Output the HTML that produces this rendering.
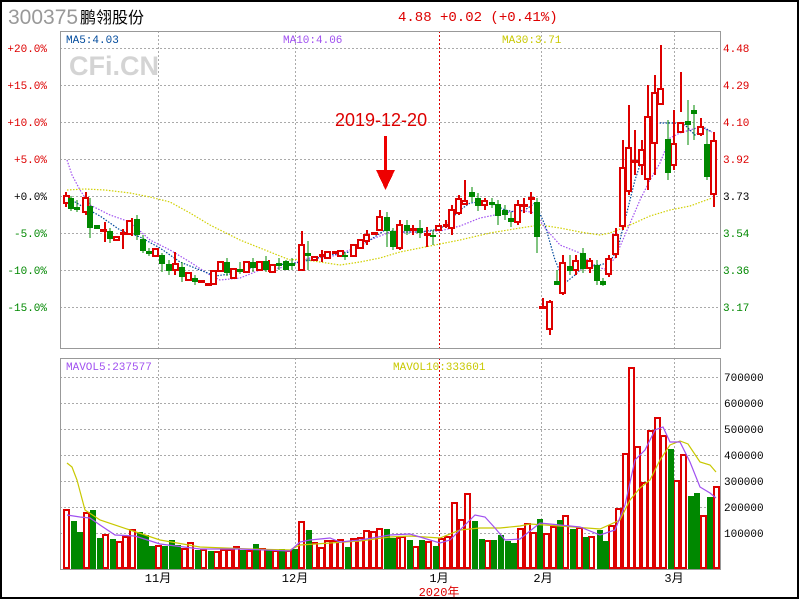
<!DOCTYPE html>
<html><head><meta charset="utf-8"><style>
body{margin:0;background:#fff}
svg{display:block}
text{font-family:"Liberation Mono","Noto Sans CJK SC",monospace;font-size:11px}
</style></head><body>
<svg width="800" height="600" viewBox="0 0 800 600" xmlns="http://www.w3.org/2000/svg" shape-rendering="crispEdges">
<rect x="1" y="1" width="797" height="597" fill="#fff" stroke="#000" stroke-width="2"/>
<text x="8" y="24" style="font-family:'Liberation Sans',sans-serif;font-size:21px" fill="#999">300375</text>
<text x="80" y="23" style="font-family:'Liberation Sans','Noto Sans CJK SC',sans-serif;font-size:16px" fill="#000">鹏翎股份</text>
<text x="398" y="21" style="font-size:14px" fill="#d00">4.88 +0.02 (+0.41%)</text>

<g stroke="#aaa" stroke-dasharray="2,2" fill="none">
<path d="M60 48.5H720M60 85.5H720M60 122.5H720M60 159.5H720M60 196.5H720M60 233.5H720M60 270.5H720M60 307.5H720"/>
<path d="M158.5 31V348M295.5 31V348M541.5 31V348M674.5 31V348"/>
<path d="M60 377.5H720M60 403.5H720M60 429.5H720M60 455.5H720M60 481.5H720M60 507.5H720M60 533.5H720"/>
<path d="M158.5 358V569M295.5 358V569M541.5 358V569M674.5 358V569"/>
</g>
<path d="M439.5 31V348M439.5 358V569" stroke="#d00" stroke-dasharray="2,2"/>
<rect x="60.5" y="31.5" width="660" height="317" fill="none" stroke="#999"/>
<rect x="60.5" y="358.5" width="660" height="211" fill="none" stroke="#999"/>

<text x="69" y="75" style="font-family:'Liberation Sans',sans-serif;font-size:27px;font-weight:bold" fill="#d4d4d4">CFi.CN</text>
<text x="66" y="43" fill="#004a9c">MA5:4.03</text>
<text x="283" y="43" fill="#a050f0">MA10:4.06</text>
<text x="502" y="43" fill="#c8c800">MA30:3.71</text>

<g text-anchor="end">
<text x="47" y="52" fill="#d00">+20.0%</text>
<text x="47" y="89" fill="#d00">+15.0%</text>
<text x="47" y="126" fill="#d00">+10.0%</text>
<text x="47" y="163" fill="#d00">+5.0%</text>
<text x="47" y="200" fill="#000">+0.0%</text>
<text x="47" y="237" fill="#080">-5.0%</text>
<text x="47" y="274" fill="#080">-10.0%</text>
<text x="47" y="311" fill="#080">-15.0%</text>
</g>
<text x="723" y="52" fill="#d00">4.48</text>
<text x="723" y="89" fill="#d00">4.29</text>
<text x="723" y="126" fill="#d00">4.10</text>
<text x="723" y="163" fill="#d00">3.92</text>
<text x="723" y="200" fill="#000">3.73</text>
<text x="723" y="237" fill="#080">3.54</text>
<text x="723" y="274" fill="#080">3.36</text>
<text x="723" y="311" fill="#080">3.17</text>

<text x="335" y="126" style="font-family:'Liberation Sans',sans-serif;font-size:18px" fill="#d00">2019-12-20</text>
<path d="M384 136h3v34h-3z" fill="#e00"/>
<path d="M376 170h19l-9.5 20z" fill="#e00"/>

<g fill="none" stroke-dasharray="1.5,1.5" stroke-width="1.2" shape-rendering="auto">
<polyline stroke="#d0d000" points="67,190 85,189 105,190 130,193 150,197 170,202 190,213 210,225 240,240 270,252 290,260 300,259 320,262 340,265 360,262 380,258 400,252 420,248 440,244 460,240 490,233 520,228 540,225 560,228 580,232 600,235 610,233 630,225 650,216 670,210 690,206 712,198"/>
<polyline stroke="#a050f0" points="67,160 72,175 80,190 90,205 110,215 130,222 150,240 170,250 190,262 210,275 220,280 240,278 260,270 280,268 295,263 310,258 330,257 350,250 370,240 390,232 420,232 440,231 460,226 480,218 500,214 520,210 535,213 545,228 560,245 580,253 595,267 605,269 615,258 625,235 640,200 650,180 660,163 670,138 680,133 690,130 700,127 712,132"/>
<polyline stroke="#004a9c" points="67,197 80,205 100,216 120,230 140,237 160,248 180,262 200,270 215,276 230,274 250,268 270,265 290,264 300,262 310,260 330,255 350,252 370,240 385,230 400,232 420,232 440,229 450,220 460,210 470,203 480,202 495,205 505,210 515,212 525,210 535,203 545,225 555,260 565,283 575,275 585,265 600,265 610,262 618,248 625,220 635,180 645,150 655,123 665,123 675,123 685,125 695,135 705,128 712,132"/>
</g>

<g stroke="#d00" fill="#fff" stroke-width="2">
<path d="M66 192v15M86 192v23M105 222v20M123 229v20M132 218v18M175 252v23M269 260v12M302 231v39M322 250v12M367 230v15M380 210v20M400 220v30M413 225v10M427 227v20M446 220v8M452 205v30M459 195v20M465 180v25M485 198v12M518 200v25M524 198v15M531 192v22M543 298v10M550 300v35M563 255v40M576 255v20M590 258v15M609 255v22M616 228v30M623 140v90M629 105v90M635 130v45M642 140v35M648 85v105M655 75v100M661 45v60M674 110v60M681 72v40M701 118v18M714 132v75"/>
<rect x="64" y="196" width="5" height="7"/><rect x="83" y="198" width="5" height="14"/><rect x="114" y="237" width="5" height="3"/><rect x="127" y="221" width="5" height="13"/><rect x="153" y="249" width="5" height="7"/><rect x="173" y="264" width="5" height="6"/><rect x="186" y="273" width="5" height="7"/><rect x="211" y="271" width="5" height="13"/><rect x="218" y="262" width="5" height="9"/><rect x="231" y="269" width="5" height="9"/><rect x="244" y="262" width="5" height="10"/><rect x="257" y="262" width="5" height="8"/><rect x="270" y="265" width="5" height="7"/><rect x="299" y="245" width="5" height="25"/><rect x="312" y="257" width="5" height="3"/><rect x="325" y="252" width="5" height="6"/><rect x="338" y="251" width="5" height="5"/><rect x="351" y="245" width="5" height="11"/><rect x="358" y="240" width="5" height="8"/><rect x="364" y="235" width="5" height="6"/><rect x="377" y="217" width="5" height="13"/><rect x="397" y="225" width="5" height="23"/><rect x="436" y="226" width="5" height="4"/><rect x="449" y="210" width="5" height="18"/><rect x="456" y="199" width="5" height="14"/><rect x="462" y="201" width="5" height="3"/><rect x="482" y="201" width="5" height="4"/><rect x="515" y="205" width="5" height="17"/><rect x="547" y="302" width="5" height="27"/><rect x="560" y="263" width="5" height="30"/><rect x="573" y="261" width="5" height="9"/><rect x="587" y="261" width="5" height="7"/><rect x="606" y="259" width="5" height="15"/><rect x="613" y="235" width="5" height="19"/><rect x="620" y="168" width="5" height="58"/><rect x="626" y="148" width="5" height="43"/><rect x="639" y="150" width="5" height="15"/><rect x="645" y="117" width="5" height="62"/><rect x="652" y="93" width="5" height="50"/><rect x="658" y="89" width="5" height="15"/><rect x="671" y="144" width="5" height="21"/><rect x="678" y="123" width="5" height="9"/><rect x="698" y="127" width="5" height="7"/><rect x="711" y="141" width="5" height="53"/>
</g>
<g fill="#d00">
<rect x="100" y="229" width="7" height="3"/><rect x="120" y="232" width="7" height="3"/><rect x="198" y="280" width="7" height="3"/><rect x="205" y="283" width="7" height="3"/><rect x="319" y="254" width="7" height="3"/><rect x="332" y="251" width="7" height="3"/><rect x="371" y="232" width="7" height="3"/><rect x="410" y="228" width="7" height="3"/><rect x="424" y="233" width="7" height="3"/><rect x="443" y="224" width="7" height="3"/><rect x="521" y="204" width="7" height="3"/><rect x="528" y="197" width="7" height="3"/><rect x="539" y="306" width="7" height="3"/><rect x="632" y="160" width="7" height="3"/>
</g>
<g fill="#080" stroke="#080">
<path d="M71 196v15M77 200v12M90 198v40M110 228v15M137 215v25M143 235v18M149 248v8M162 253v19M169 260v15M182 262v20M195 275v10M227 258v18M240 262v12M253 258v14M266 256v16M279 258v12M286 260v10M292 258v12M308 241v29M345 252v8M387 212v35M393 228v22M407 220v15M420 220v18M433 230v15M472 187v15M478 193v18M492 198v10M498 200v25M505 205v15M511 212v15M537 198v55M557 270v15M570 255v20M583 248v25M597 260v25M603 278v8M668 120v60M688 100v45M694 105v35M707 130v50"/>
</g>
<g fill="#080">
<rect x="68" y="198" width="6" height="11"/><rect x="74" y="207" width="6" height="3"/><rect x="87" y="206" width="6" height="22"/><rect x="94" y="225" width="6" height="4"/><rect x="107" y="231" width="6" height="8"/><rect x="134" y="219" width="6" height="16"/><rect x="140" y="239" width="6" height="12"/><rect x="146" y="251" width="6" height="3"/><rect x="159" y="255" width="6" height="9"/><rect x="166" y="264" width="6" height="7"/><rect x="179" y="267" width="6" height="10"/><rect x="192" y="278" width="6" height="4"/><rect x="224" y="262" width="6" height="11"/><rect x="237" y="269" width="6" height="3"/><rect x="250" y="262" width="6" height="6"/><rect x="263" y="261" width="6" height="9"/><rect x="276" y="263" width="6" height="3"/><rect x="283" y="261" width="6" height="9"/><rect x="289" y="263" width="6" height="3"/><rect x="305" y="253" width="6" height="3"/><rect x="342" y="255" width="6" height="2"/><rect x="384" y="217" width="6" height="14"/><rect x="390" y="231" width="6" height="16"/><rect x="404" y="225" width="6" height="6"/><rect x="417" y="228" width="6" height="5"/><rect x="430" y="235" width="6" height="2"/><rect x="469" y="192" width="6" height="5"/><rect x="475" y="198" width="6" height="8"/><rect x="489" y="202" width="6" height="3"/><rect x="495" y="204" width="6" height="12"/><rect x="502" y="210" width="6" height="5"/><rect x="508" y="218" width="6" height="4"/><rect x="534" y="202" width="6" height="35"/><rect x="554" y="281" width="6" height="4"/><rect x="567" y="266" width="6" height="5"/><rect x="580" y="253" width="6" height="16"/><rect x="594" y="265" width="6" height="16"/><rect x="600" y="281" width="6" height="4"/><rect x="665" y="139" width="6" height="34"/><rect x="685" y="121" width="6" height="4"/><rect x="691" y="110" width="6" height="4"/><rect x="704" y="144" width="6" height="33"/>
</g>

<text x="66" y="370" fill="#a050f0">MAVOL5:237577</text>
<text x="393" y="370" fill="#c8c800">MAVOL10:333601</text>
<text x="724" y="381" fill="#000">700000</text>
<text x="724" y="407" fill="#000">600000</text>
<text x="724" y="433" fill="#000">500000</text>
<text x="724" y="459" fill="#000">400000</text>
<text x="724" y="485" fill="#000">300000</text>
<text x="724" y="511" fill="#000">200000</text>
<text x="724" y="537" fill="#000">100000</text>

<g stroke="#d00" fill="#fff" stroke-width="2">
<rect x="64" y="510" width="5" height="58"/><rect x="84" y="513" width="5" height="55"/><rect x="103" y="535" width="5" height="33"/><rect x="117" y="542" width="5" height="26"/><rect x="123" y="537" width="5" height="31"/><rect x="130" y="530" width="5" height="38"/><rect x="156" y="546" width="5" height="22"/><rect x="182" y="549" width="5" height="19"/><rect x="188" y="543" width="5" height="25"/><rect x="201" y="550" width="5" height="18"/><rect x="214" y="552" width="5" height="16"/><rect x="221" y="550" width="5" height="18"/><rect x="227" y="550" width="5" height="18"/><rect x="234" y="547" width="5" height="21"/><rect x="247" y="551" width="5" height="17"/><rect x="260" y="549" width="5" height="19"/><rect x="273" y="551" width="5" height="17"/><rect x="286" y="551" width="5" height="17"/><rect x="299" y="522" width="5" height="46"/><rect x="312" y="543" width="5" height="25"/><rect x="319" y="548" width="5" height="20"/><rect x="325" y="541" width="5" height="27"/><rect x="332" y="541" width="5" height="27"/><rect x="338" y="540" width="5" height="28"/><rect x="351" y="539" width="5" height="29"/><rect x="358" y="538" width="5" height="30"/><rect x="364" y="531" width="5" height="37"/><rect x="371" y="532" width="5" height="36"/><rect x="377" y="529" width="5" height="39"/><rect x="397" y="538" width="5" height="30"/><rect x="400" y="537" width="5" height="31"/><rect x="413" y="547" width="5" height="21"/><rect x="426" y="542" width="5" height="26"/><rect x="439" y="539" width="5" height="29"/><rect x="445" y="537" width="5" height="31"/><rect x="452" y="503" width="5" height="65"/><rect x="459" y="520" width="5" height="48"/><rect x="465" y="494" width="5" height="74"/><rect x="485" y="541" width="5" height="27"/><rect x="518" y="529" width="5" height="39"/><rect x="525" y="524" width="5" height="44"/><rect x="531" y="533" width="5" height="35"/><rect x="544" y="534" width="5" height="34"/><rect x="551" y="527" width="5" height="41"/><rect x="563" y="516" width="5" height="52"/><rect x="577" y="528" width="5" height="40"/><rect x="589" y="537" width="5" height="31"/><rect x="609" y="526" width="5" height="42"/><rect x="616" y="509" width="5" height="59"/><rect x="623" y="454" width="5" height="114"/><rect x="629" y="368" width="5" height="200"/><rect x="635" y="447" width="5" height="121"/><rect x="642" y="483" width="5" height="85"/><rect x="648" y="431" width="5" height="137"/><rect x="655" y="418" width="5" height="150"/><rect x="661" y="436" width="5" height="132"/><rect x="674" y="481" width="5" height="87"/><rect x="681" y="455" width="5" height="113"/><rect x="701" y="516" width="5" height="52"/><rect x="714" y="487" width="5" height="81"/>
</g>
<g fill="#080">
<rect x="71" y="521" width="6" height="48"/><rect x="77" y="532" width="6" height="37"/><rect x="90" y="510" width="6" height="59"/><rect x="97" y="538" width="6" height="31"/><rect x="110" y="539" width="6" height="30"/><rect x="137" y="532" width="6" height="37"/><rect x="143" y="535" width="6" height="34"/><rect x="149" y="546" width="6" height="23"/><rect x="162" y="546" width="6" height="23"/><rect x="169" y="540" width="6" height="29"/><rect x="175" y="545" width="6" height="24"/><rect x="195" y="550" width="6" height="19"/><rect x="208" y="551" width="6" height="18"/><rect x="240" y="550" width="6" height="19"/><rect x="253" y="544" width="6" height="25"/><rect x="266" y="549" width="6" height="20"/><rect x="279" y="549" width="6" height="20"/><rect x="292" y="549" width="6" height="20"/><rect x="306" y="530" width="6" height="39"/><rect x="345" y="547" width="6" height="22"/><rect x="384" y="529" width="6" height="40"/><rect x="390" y="538" width="6" height="31"/><rect x="407" y="540" width="6" height="29"/><rect x="419" y="540" width="6" height="29"/><rect x="433" y="546" width="6" height="23"/><rect x="472" y="521" width="6" height="48"/><rect x="479" y="539" width="6" height="30"/><rect x="491" y="540" width="6" height="29"/><rect x="498" y="535" width="6" height="34"/><rect x="505" y="541" width="6" height="28"/><rect x="511" y="543" width="6" height="26"/><rect x="537" y="519" width="6" height="50"/><rect x="557" y="520" width="6" height="49"/><rect x="570" y="529" width="6" height="40"/><rect x="583" y="537" width="6" height="32"/><rect x="597" y="530" width="6" height="39"/><rect x="603" y="541" width="6" height="28"/><rect x="668" y="449" width="6" height="120"/><rect x="688" y="496" width="6" height="73"/><rect x="694" y="493" width="6" height="76"/><rect x="707" y="497" width="6" height="72"/>
</g>
<g fill="none" stroke-width="1.2" shape-rendering="auto">
<polyline stroke="#c8c800" points="67,463 72,467 77,480 85,510 100,520 130,530 160,540 200,547 250,549 290,550 300,545 330,543 360,541 390,537 410,536 440,538 460,530 480,528 500,528 520,526 530,524 560,526 600,529 620,520 630,500 640,488 650,480 660,460 670,445 680,441 688,444 700,462 710,465 716,472"/>
<polyline stroke="#a050f0" points="67,515 80,517 90,518 100,525 115,535 135,536 160,544 200,549 240,549 290,551 300,542 310,540 330,538 340,542 360,540 390,535 410,534 440,543 450,540 460,530 475,515 485,517 495,528 505,540 520,539 540,523 560,525 580,527 600,535 615,530 625,505 635,460 645,450 655,430 663,427 670,442 680,442 690,462 700,487 710,493 716,498"/>
</g>

<g fill="#000" text-anchor="middle" style="font-family:'Liberation Mono','Noto Sans CJK SC',monospace;font-size:12px">
<text x="158" y="582" style="font-size:12px">11月</text>
<text x="295" y="582" style="font-size:12px">12月</text>
<text x="439" y="582" style="font-size:12px">1月</text>
<text x="543" y="582" style="font-size:12px">2月</text>
<text x="674" y="582" style="font-size:12px">3月</text>
<text x="439" y="596" fill="#d00" style="font-size:12px">2020年</text>
</g>
</svg>
</body></html>
